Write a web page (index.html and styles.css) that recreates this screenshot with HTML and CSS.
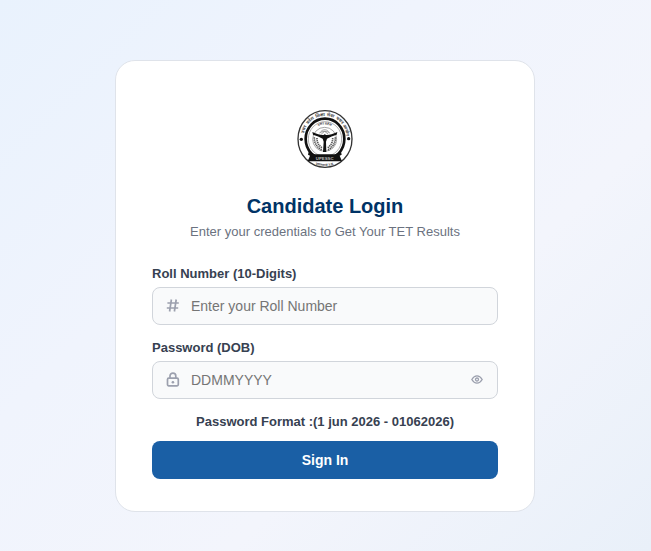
FILE: index.html
```html
<!DOCTYPE html>
<html lang="en">
<head>
  <meta charset="UTF-8">
  <meta name="viewport" content="width=device-width, initial-scale=1.0">
  <title>Candidate Login</title>
  <link rel="stylesheet" href="styles.css">
</head>
<body>
  <main class="login-card">
    <!-- Commission seal -->
    <svg class="logo" viewBox="18 14 174 180" role="img" aria-label="UPESSC">
      <defs>
        <path id="arcTop" d="M41 98 A64 63 0 0 1 169 98"/>
        <path id="arcInner" d="M72 80 A36 36 0 0 1 136 80"/>
        <path id="arcBottom" d="M58 171 A86 90 0 0 0 151 171"/>
      </defs>
      <ellipse cx="105" cy="104" rx="81" ry="85" fill="#fff" stroke="#333" stroke-width="4"/>
      <ellipse cx="105" cy="104" rx="58" ry="61" fill="#fff" stroke="#111" stroke-width="8"/>
      <ellipse cx="105" cy="104" rx="50" ry="52" fill="none" stroke="#888" stroke-width="2"/>
      <text class="seal-text"><textPath href="#arcTop" startOffset="11%">उत्तर</textPath></text>
      <text class="seal-text"><textPath href="#arcTop" startOffset="27%">प्रदेश</textPath></text>
      <text class="seal-text"><textPath href="#arcTop" startOffset="43%">शिक्षा</textPath></text>
      <text class="seal-text"><textPath href="#arcTop" startOffset="58%">सेवा</textPath></text>
      <text class="seal-text"><textPath href="#arcTop" startOffset="73%">चयन</textPath></text>
      <text class="seal-text"><textPath href="#arcTop" startOffset="90%">आयोग</textPath></text>
      <text class="seal-text seal-text-inner"><textPath href="#arcInner" startOffset="50%">उत्तर प्रदेश</textPath></text>
      <circle cx="34" cy="105" r="5" fill="#111"/>
      <circle cx="176" cy="103" r="5" fill="#111"/>
      <g fill="none" stroke="#777" stroke-width="2">
        <circle cx="104" cy="105" r="36"/>
        <path d="M92 82 Q104 70 116 82M88 86 Q104 76 120 86M94 89 L104 81 L114 89"/>
      </g>
      <g fill="none" stroke="#555" stroke-width="5" stroke-dasharray="4 2">
        <path d="M73 99 Q72 123 95 137"/>
        <path d="M81 101 Q80 119 96 130"/>
        <path d="M136 99 Q137 123 114 137"/>
        <path d="M128 101 Q129 119 113 130"/>
      </g>
      <path fill="#111" d="M67 83 Q88 93 101 92 Q104 87 108 92 Q121 93 142 83 L140 91 Q124 95 111 103 L108 112 L109 143 L99 143 L101 112 L98 103 Q85 95 69 91Z"/>
      <path fill="#111" d="M57 138 Q67 150 76 150 H133 Q142 150 152 138 L155 151 L149 154 L156 171 H53 L60 154 L54 151Z"/>
      <text class="seal-name" x="104" y="166">UPESSC</text>
      <text class="seal-text seal-text-inner"><textPath href="#arcBottom" startOffset="50%">प्रयागराज उ.प्र.</textPath></text>
    </svg>

    <h1 class="title">Candidate Login</h1>
    <p class="subtitle">Enter your credentials to Get Your TET Results</p>

    <form class="login-form">
      <div class="form-group">
        <label for="rollNumber">Roll Number (10-Digits)</label>
        <div class="input-wrap">
          <svg class="field-icon" viewBox="0 0 16 16" aria-hidden="true">
            <path d="M6.4 1.5 L4.6 13.5M11.2 1.5 L9.4 13.5M2.4 5H13.8M1.8 10H13.2"/>
          </svg>
          <input type="text" id="rollNumber" maxlength="10" placeholder="Enter your Roll Number">
        </div>
      </div>

      <div class="form-group">
        <label for="password">Password (DOB)</label>
        <div class="input-wrap">
          <svg class="field-icon" viewBox="0 0 16 16" aria-hidden="true">
            <rect x="2.5" y="6.2" width="10.8" height="7.6" rx="1.2"/>
            <path d="M5 6.2V4a2.9 2.9 0 0 1 5.8 0V6.2"/>
            <circle class="dot" cx="7.9" cy="10.2" r="1.3"/>
          </svg>
          <input type="password" id="password" maxlength="8" placeholder="DDMMYYYY">
          <button type="button" class="toggle-password" aria-label="Show password" onclick="togglePassword()">
            <svg viewBox="0 0 12 12" aria-hidden="true">
              <path d="M.8 5.5Q3 1.9 6 1.9T11.2 5.5Q9 9.1 6 9.1T.8 5.5Z"/>
              <circle cx="6" cy="5.5" r="1.5"/>
            </svg>
          </button>
        </div>
      </div>

      <p class="hint">Password Format :(1 jun 2026 - 01062026)</p>
      <button type="submit" class="sign-in">Sign In</button>
    </form>
  </main>

  <script>
    function togglePassword() {
      const field = document.getElementById('password');
      field.type = field.type === 'password' ? 'text' : 'password';
    }
  </script>
</body>
</html>
```
FILE: styles.css
```css
* {
  box-sizing: border-box;
}

body {
  margin: 0;
  min-height: 100vh;
  padding: 60px 21px 39px 20px;
  font-family: "Liberation Sans", Arial, sans-serif;
  background: linear-gradient(135deg, #e9f2fd 0%, #f0f4fd 35%, #f3f5fc 65%, #e9f0f9 100%);
}

.login-card {
  max-width: 420px;
  margin: 0 auto;
  padding: 48px 36px 32px;
  background-color: #fff;
  border: 1px solid #dfe3ea;
  border-radius: 20px;
}

.logo {
  display: block;
  width: 58px;
  height: 60px;
  margin: 0 auto 24px;
}

.seal-text {
  font-family: "Noto Sans", "Liberation Sans", sans-serif;
  font-size: 13px;
  font-weight: bold;
  text-anchor: middle;
  fill: #444;
}

.seal-text-inner {
  font-size: 10px;
}

.seal-name {
  font-size: 13px;
  font-weight: bold;
  text-anchor: middle;
  fill: #bbb;
}

.title {
  margin: 0;
  font-size: 20px;
  line-height: 26px;
  text-align: center;
  color: #003366;
}

.subtitle {
  margin: 4px 0 25px;
  font-size: 13px;
  line-height: 18px;
  text-align: center;
  color: #6b7280;
}

.form-group {
  margin-bottom: 15px;
}

.form-group label {
  display: block;
  margin-bottom: 5px;
  font-size: 13px;
  font-weight: bold;
  line-height: 16px;
  color: #374151;
}

.input-wrap {
  display: flex;
  align-items: center;
  height: 38px;
  padding: 0 12px;
  background-color: #f9fafb;
  border: 1px solid #d1d5db;
  border-radius: 8px;
}

.input-wrap:focus-within {
  border-color: #1a5fa5;
}

.input-wrap input {
  flex: 1;
  min-width: 0;
  margin-left: 10px;
  padding: 0;
  font-family: inherit;
  font-size: 14px;
  color: #111827;
  background: none;
  border: none;
  outline: none;
}

.input-wrap input::placeholder {
  color: #757575;
}

.input-wrap svg {
  fill: none;
  stroke: #9ca0ae;
}

.field-icon {
  flex: none;
  width: 16px;
  height: 16px;
  stroke-width: 1.7;
}

.input-wrap .dot {
  fill: #9ca0ae;
  stroke: none;
}

.toggle-password {
  display: flex;
  padding: 2px;
  background: none;
  border: none;
  cursor: pointer;
}

.toggle-password svg {
  width: 12px;
  height: 12px;
  stroke-width: 1.3;
}

.hint {
  margin: 0 0 11px;
  font-size: 13px;
  font-weight: bold;
  line-height: 16px;
  text-align: center;
  color: #374151;
}

.sign-in {
  display: block;
  width: 100%;
  height: 38px;
  font-family: inherit;
  font-size: 14px;
  font-weight: bold;
  color: #fff;
  background-color: #1a5fa5;
  border: none;
  border-radius: 8px;
  cursor: pointer;
}
```
